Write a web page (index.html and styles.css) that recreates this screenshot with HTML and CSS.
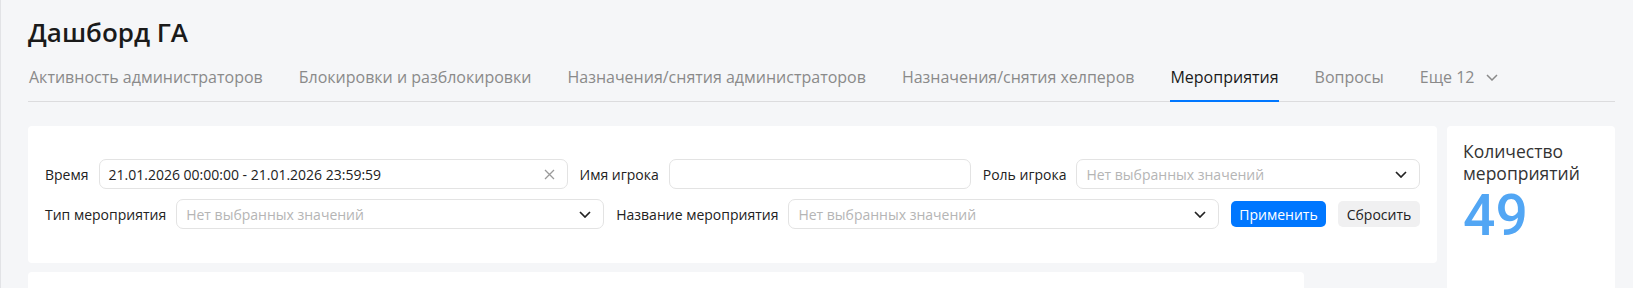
FILE: index.html
```html
<!DOCTYPE html>
<html lang="ru">
<head>
    <meta charset="UTF-8">
    <meta name="viewport" content="width=device-width, initial-scale=1.0">
    <title>Дашборд ГА</title>
    <link rel="stylesheet" href="styles.css">
</head>
<body>
    <div class="page">
        <h1 class="page-title">Дашборд ГА</h1>

        <nav class="tabs">
            <a class="tab">Активность администраторов</a>
            <a class="tab">Блокировки и разблокировки</a>
            <a class="tab">Назначения/снятия администраторов</a>
            <a class="tab">Назначения/снятия хелперов</a>
            <a class="tab active">Мероприятия</a>
            <a class="tab">Вопросы</a>
            <a class="tab more">Еще 12
                <svg class="chevron" width="12" height="7" viewBox="0 0 12 7"><path d="M1 1l5 5 5-5" fill="none" stroke="currentColor" stroke-width="1.5"/></svg>
            </a>
        </nav>

        <div class="board">
            <div class="main-col">
                <section class="card filters">
                    <div class="filter-row">
                        <div class="field">
                            <span class="field-label">Время</span>
                            <div class="control w-time">
                                <span class="value">21.01.2026 00:00:00 - 21.01.2026 23:59:59</span>
                                <svg class="clear" width="11" height="11" viewBox="0 0 11 11"><path d="M1 1l9 9M10 1l-9 9" stroke="currentColor" stroke-width="1.3"/></svg>
                            </div>
                        </div>
                        <div class="field">
                            <span class="field-label">Имя игрока</span>
                            <div class="control w-name"></div>
                        </div>
                        <div class="field grow">
                            <span class="field-label">Роль игрока</span>
                            <div class="control select">
                                <span class="placeholder">Нет выбранных значений</span>
                                <svg class="arrow" width="12" height="7" viewBox="0 0 12 7"><path d="M1 1l5 5 5-5" fill="none" stroke="currentColor" stroke-width="1.7"/></svg>
                            </div>
                        </div>
                    </div>
                    <div class="filter-row">
                        <div class="field">
                            <span class="field-label">Тип мероприятия</span>
                            <div class="control select w-type">
                                <span class="placeholder">Нет выбранных значений</span>
                                <svg class="arrow" width="12" height="7" viewBox="0 0 12 7"><path d="M1 1l5 5 5-5" fill="none" stroke="currentColor" stroke-width="1.7"/></svg>
                            </div>
                        </div>
                        <div class="field grow">
                            <span class="field-label">Название мероприятия</span>
                            <div class="control select">
                                <span class="placeholder">Нет выбранных значений</span>
                                <svg class="arrow" width="12" height="7" viewBox="0 0 12 7"><path d="M1 1l5 5 5-5" fill="none" stroke="currentColor" stroke-width="1.7"/></svg>
                            </div>
                        </div>
                        <button class="btn btn-primary">Применить</button>
                        <button class="btn btn-reset">Сбросить</button>
                    </div>
                </section>

                <section class="card table-card"></section>
            </div>

            <aside class="card stat">
                <div class="stat-title">Количество мероприятий</div>
                <div class="stat-value">49</div>
            </aside>
        </div>
    </div>
</body>
</html>
```

FILE: styles.css
```css
html, body {
    margin: 0;
    height: 100%;
    overflow: hidden;
}
body {
    background: #f5f6f8;
    color: #222;
    font-family: "Open Sans", "Noto Sans", Arial, sans-serif;
}
.page {
    border-left: 1px solid #e2e3e6;
    padding: 0 18px 0 27px;
    min-height: 100%;
}
.page-title {
    margin: 0;
    padding-top: 14px;
    font-size: 26px;
    line-height: 36px;
    font-weight: 600;
    color: #1a1a1a;
}

/* tabs */
.tabs {
    display: flex;
    align-items: center;
    gap: 36px;
    margin-top: 15px;
    padding-left: 1px;
    border-bottom: 1px solid #dcdcde;
}
.tab {
    display: flex;
    align-items: center;
    gap: 12px;
    padding: 0 0 11px;
    margin-bottom: -1px;
    border-bottom: 2px solid transparent;
    font-size: 16px;
    line-height: 24px;
    color: #8a8a8a;
    cursor: pointer;
}
.tab.active {
    color: #1a1a1a;
    border-bottom-color: #0077ff;
}
.tab .chevron {
    color: #8a8a8a;
}

/* board */
.board {
    display: grid;
    grid-template-columns: 1fr 168px;
    gap: 10px;
    margin-top: 24px;
}
.main-col {
    display: flex;
    flex-direction: column;
    gap: 9px;
}
.card {
    background: #fff;
    border-radius: 4px;
}
.filters {
    padding: 33px 17px 34px 17px;
    display: flex;
    flex-direction: column;
    gap: 10px;
}
.filter-row {
    display: flex;
    align-items: center;
    gap: 12px;
}
.field {
    display: flex;
    align-items: center;
    gap: 10px;
}
.field.grow {
    flex: 1;
}
.field.grow .control {
    flex: 1;
}
.field-label {
    font-size: 14px;
    font-weight: 500;
    color: #222;
    white-space: nowrap;
}
.control {
    box-sizing: border-box;
    height: 30px;
    border: 1px solid #e3e3e3;
    border-radius: 7px;
    display: flex;
    align-items: center;
    padding: 0 10px 0 9px;
    font-size: 14px;
    color: #222;
}
.w-time { width: 469px; }
.w-name { width: 302px; }
.w-type { width: 428px; }
.control .value {
    flex: 1;
}
.control .placeholder {
    flex: 1;
    color: #b5b5b5;
    white-space: nowrap;
}
.clear {
    color: #9a9a9a;
    margin-right: 2px;
}
.arrow {
    color: #222;
    margin-right: 2px;
}
.btn {
    height: 26px;
    border: 0;
    border-radius: 5px;
    font-family: inherit;
    font-size: 14px;
    font-weight: 500;
    cursor: pointer;
}
.btn-primary {
    width: 95px;
    background: #0077ff;
    color: #fff;
}
.btn-reset {
    width: 82px;
    background: #f0f0f1;
    color: #222;
    font-weight: 400;
}
.table-card {
    width: 1276px;
    height: 300px;
}

/* counter */
.stat {
    padding: 14px 16px;
    min-height: 400px;
}
.stat-title {
    font-size: 17.5px;
    line-height: 22px;
    color: #333;
}
.stat-value {
    margin-top: 4px;
    font-family: Roboto, "Liberation Sans", sans-serif;
    font-size: 57px;
    line-height: 56px;
    font-weight: 500;
    color: #52a6f4;
}
```
